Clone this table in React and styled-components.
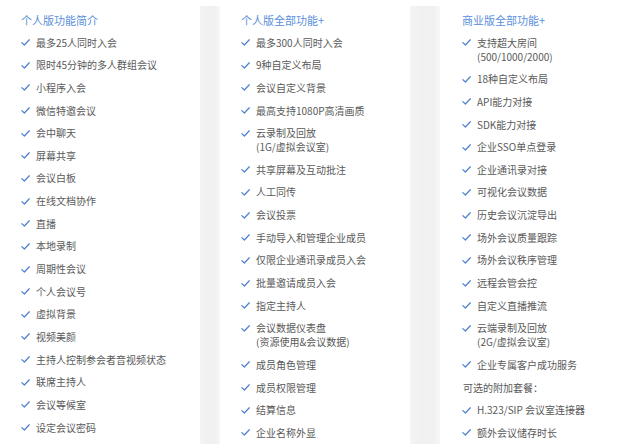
import React from "react";
import styled, { createGlobalStyle } from "styled-components";

const GlobalStyle = createGlobalStyle`
  html, body {
    margin: 0;
    padding: 0;
    background: #ffffff;
    overflow: hidden;
  }
  * {
    box-sizing: border-box;
  }
`;

const Page = styled.div`
  width: 640px;
  height: 444px;
  display: flex;
  font-family: "Noto Sans CJK SC", "Noto Sans", sans-serif;
  background: #ffffff;
  overflow: hidden;
`;

const Panel = styled.div`
  width: ${(p) => p.$width}px;
  flex-shrink: 0;
  padding: 13px 0 0 ${(p) => p.$pad}px;
  display: flex;
  flex-direction: column;
  gap: 8.65px;
  background: #ffffff;
`;

const Gutter = styled.div`
  width: ${(p) => p.$width}px;
  flex-shrink: 0;
  margin-top: 6px;
  background: linear-gradient(
    to right,
    #f4f4f4 0%,
    #f0f0f0 40%,
    #f1f1f1 80%,
    #f7f7f7 100%
  );
`;

const Heading = styled.div`
  font-size: 11px;
  line-height: 14px;
  color: #5a8fdc;
  white-space: nowrap;
`;

const Item = styled.div`
  display: flex;
  align-items: flex-start;
  font-size: 10px;
  line-height: 14px;
  color: #595959;
`;

const CheckBox = styled.span`
  width: 9px;
  height: 14px;
  margin-right: 6px;
  flex-shrink: 0;
  display: flex;
  align-items: center;
`;

const Label = styled.span`
  white-space: pre-line;
`;

const Note = styled.div`
  font-size: 10px;
  line-height: 14px;
  color: #595959;
  padding-left: 1px;
`;

const Check = () => (
  <CheckBox>
    <svg width="9" height="7" viewBox="0 0 9 7">
      <polyline
        points="0.8,3.6 3.4,6 8.3,0.8"
        fill="none"
        stroke="#4f82cf"
        strokeWidth="1.25"
        strokeLinecap="round"
        strokeLinejoin="round"
      />
    </svg>
  </CheckBox>
);

const columns = [
  {
    width: 200,
    pad: 21,
    gutter: 20,
    title: "个人版功能简介",
    items: [
      "最多25人同时入会",
      "限时45分钟的多人群组会议",
      "小程序入会",
      "微信特邀会议",
      "会中聊天",
      "屏幕共享",
      "会议白板",
      "在线文档协作",
      "直播",
      "本地录制",
      "周期性会议",
      "个人会议号",
      "虚拟背景",
      "视频美颜",
      "主持人控制参会者音视频状态",
      "联席主持人",
      "会议等候室",
      "设定会议密码",
    ],
  },
  {
    width: 190,
    pad: 21,
    gutter: 30,
    title: "个人版全部功能+",
    items: [
      "最多300人同时入会",
      "9种自定义布局",
      "会议自定义背景",
      "最高支持1080P高清画质",
      "云录制及回放\n(1G/虚拟会议室)",
      "共享屏幕及互动批注",
      "人工同传",
      "会议投票",
      "手动导入和管理企业成员",
      "仅限企业通讯录成员入会",
      "批量邀请成员入会",
      "指定主持人",
      "会议数据仪表盘\n(资源使用&会议数据)",
      "成员角色管理",
      "成员权限管理",
      "结算信息",
      "企业名称外显",
    ],
  },
  {
    width: 200,
    pad: 22,
    title: "商业版全部功能+",
    items: [
      "支持超大房间\n(500/1000/2000)",
      "18种自定义布局",
      "API能力对接",
      "SDK能力对接",
      "企业SSO单点登录",
      "企业通讯录对接",
      "可视化会议数据",
      "历史会议沉淀导出",
      "场外会议质量跟踪",
      "场外会议秩序管理",
      "远程会管会控",
      "自定义直播推流",
      "云端录制及回放\n(2G/虚拟会议室)",
      "企业专属客户成功服务",
      { note: "可选的附加套餐：" },
      "H.323/SIP 会议室连接器",
      "额外会议储存时长",
    ],
  },
];

const App = () => {
  return (
    <>
      <GlobalStyle />
      <Page>
        {columns.map((col, i) => (
          <React.Fragment key={i}>
            <Panel $width={col.width} $pad={col.pad}>
              <Heading>{col.title}</Heading>
              {col.items.map((item, j) =>
                typeof item === "string" ? (
                  <Item key={j}>
                    <Check />
                    <Label>{item}</Label>
                  </Item>
                ) : (
                  <Note key={j}>{item.note}</Note>
                )
              )}
            </Panel>
            {col.gutter ? <Gutter $width={col.gutter} /> : null}
          </React.Fragment>
        ))}
      </Page>
    </>
  );
};

export default App;
